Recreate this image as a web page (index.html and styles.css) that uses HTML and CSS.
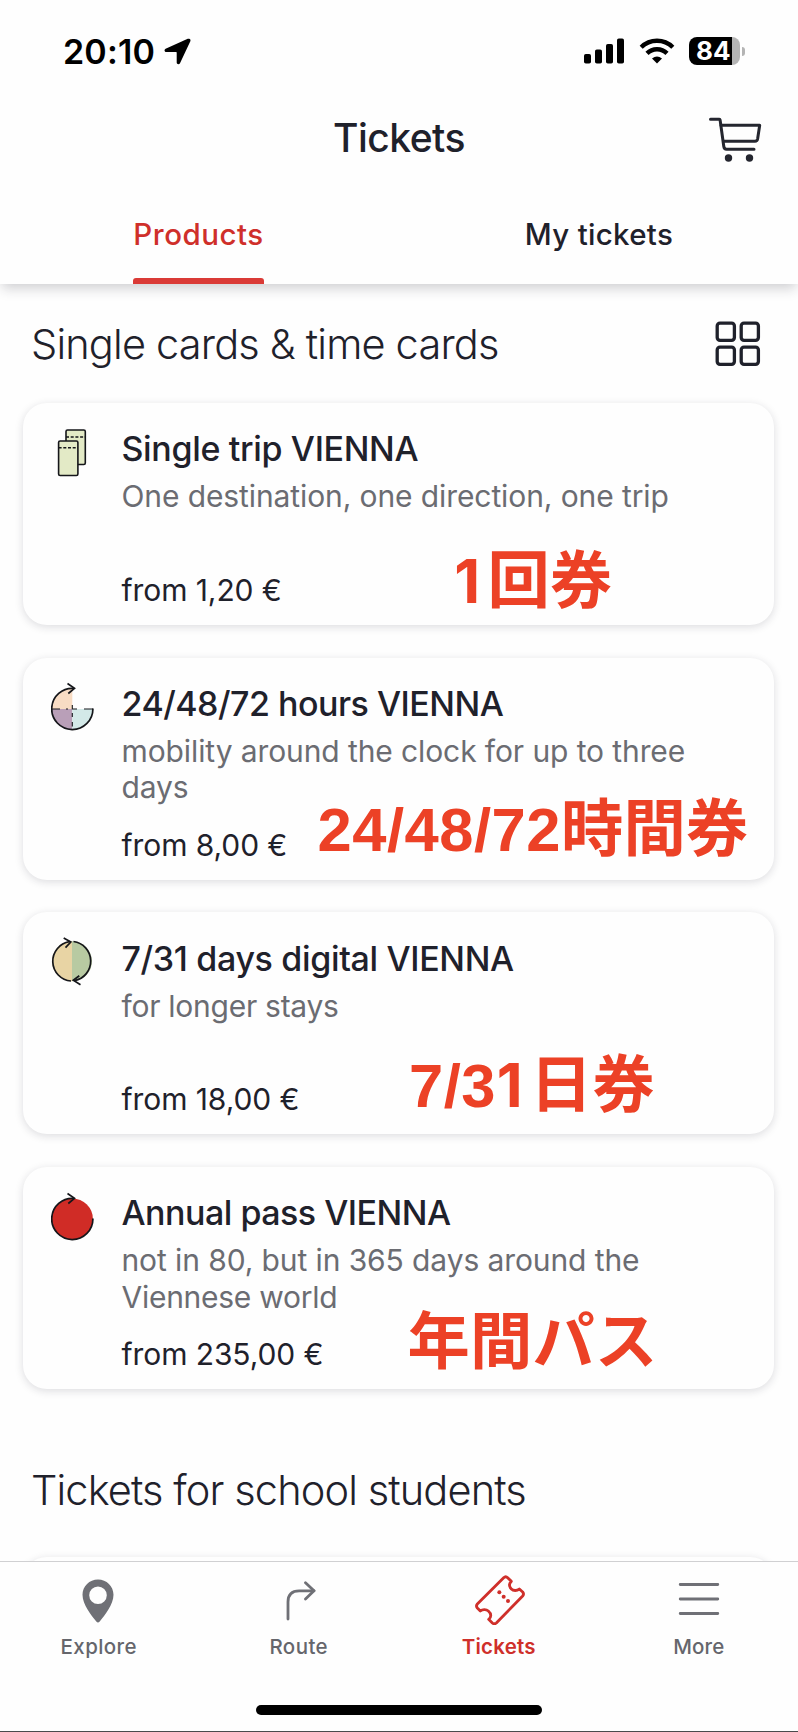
FILE: index.html
```html
<!DOCTYPE html>
<html lang="en">
<head>
<meta charset="utf-8">
<title>Tickets</title>
<link rel="stylesheet" href="styles.css">
</head>
<body>
<div class="phone">
  <header class="header">
    <div class="status">
      <div class="status-left">
        <span class="clock">20:10</span>
        <svg class="location" viewBox="0 0 27 27" width="27" height="27"><path d="M25.8 1.1C26.7 1.7 26.6 2.8 26.1 3.8L16 25.2C15.2 26.9 12.7 26.4 12.7 24.5V14.6Q12.7 14 12.1 14H2.3C.3 14-.1 11.6 1.6 10.8L23.2.9C24.1.5 25.1.6 25.8 1.1Z"/></svg>
      </div>
      <div class="status-right">
        <svg viewBox="0 0 40 26" width="40" height="26"><rect y="16" width="7" height="9.5" rx="1.8"/><rect x="11" y="11.5" width="7" height="14" rx="1.8"/><rect x="22" y="6" width="7" height="19.5" rx="1.8"/><rect x="33" y="0.5" width="7" height="25" rx="1.8"/></svg>
        <svg class="wifi" viewBox="0 0 36 26" width="36" height="26"><g fill="none" stroke="#000" stroke-width="4.4"><path d="M2.2 9.2A22.5 22.5 0 0 1 33.8 9.2"/><path d="M8 15.4A14 14 0 0 1 28 15.4"/></g><path d="M18 25.6L13 20.6Q18 16.4 23 20.6Z"/></svg>
        <div class="battery">84</div>
        <span class="battery-tip"></span>
      </div>
    </div>
    <div class="titlebar">
      <h1 class="title">Tickets</h1>
      <svg class="cart" viewBox="0 0 54 46" width="54" height="46"><g fill="none" stroke="#24262f" stroke-width="3" stroke-linecap="round" stroke-linejoin="round"><path d="M2.5 2.3H11.3Q12 2.3 12.1 3L15.8 29.5Q16.2 32.2 18.5 32.2H46"/><path d="M13 8.2H51.7L49.6 22Q49.2 24.2 47 24.2H15.5"/></g><circle cx="20.5" cy="41" r="3.7"/><circle cx="41.5" cy="41" r="3.7"/></svg>
    </div>
    <nav class="tabs">
      <div class="tab"><span class="tab-label tab-active">Products</span></div>
      <div class="tab"><span class="tab-label tab-idle">My tickets</span></div>
    </nav>
  </header>

  <main class="content">
    <div class="section-head">
      <h2 class="section-title">Single cards &amp; time cards</h2>
      <svg viewBox="0 0 46 46" width="46" height="46"><g fill="none" stroke="#1f212b" stroke-width="3.3"><rect x="2.2" y="2.2" width="17.2" height="17.2" rx="2.8"/><rect x="26.2" y="2.2" width="17.2" height="17.2" rx="2.8"/><rect x="2.2" y="26.2" width="17.2" height="17.2" rx="2.8"/><rect x="26.2" y="26.2" width="17.2" height="17.2" rx="2.8"/></g></svg>
    </div>

    <div class="cards">
      <article class="card">
        <svg class="card-icon" viewBox="0 0 46 56" width="46" height="56"><g fill="#e3eac6" stroke="#15161a" stroke-width="1.6"><rect x="15" y="4" width="19.3" height="34.5" rx="1.5"/><path d="M15 11H34.3" stroke-dasharray="3 1.7"/><rect x="7.6" y="15" width="19.3" height="34.5" rx="1.5"/><path d="M7.6 21.8H26.9" stroke-dasharray="3 1.7"/></g></svg>
        <div class="card-body">
          <h3 class="card-title">Single trip VIENNA</h3>
          <p class="card-text">One destination, one direction, one trip</p>
          <p class="price">from 1,20 €</p>
        </div>
        <span class="note note-single" lang="ja"><span class="one">1</span><span class="kanji">回券</span></span>
      </article>

      <article class="card">
        <svg class="card-icon" viewBox="0 0 46 56" width="46" height="56"><path fill="#f8dcc4" d="M21.3 29V8.5A20.5 20.5 0 0 0 .8 29Z"/><path fill="#b99fb8" d="M21.3 29V49.5A20.5 20.5 0 0 1 .8 29Z"/><path fill="#d3e9e8" d="M21.3 29V49.5A20.5 20.5 0 0 0 41.8 29Z"/><g fill="none" stroke="#15161a" stroke-width="1.7"><path d="M23 8.4A20.6 20.6 0 1 0 41.9 28.5"/><path d="M16.5 3.5L23.5 8.4L17.3 13.5"/><path stroke-width="1.1" d="M1 29H9M15 29H17M21.3 25V29H26M33 29H42M21.3 33V37M21.3 42V46.5"/></g></svg>
        <div class="card-body">
          <h3 class="card-title tight">24/48/72 hours VIENNA</h3>
          <p class="card-text">mobility around the clock for up to three <span class="line">days</span></p>
          <p class="price">from 8,00 €</p>
        </div>
        <span class="note note-hours" lang="ja">24/48/72<span class="kanji">時間券</span></span>
      </article>

      <article class="card">
        <svg class="card-icon" viewBox="0 0 46 56" width="46" height="56"><path fill="#e8d4a4" d="M21 6.3A20 20 0 0 0 21 46.3Z"/><path fill="#b8caa2" d="M21 6.3A20 20 0 0 1 21 46.3Z"/><g fill="none" stroke="#15161a" stroke-width="1.7"><path d="M18.5 6.7A19.8 19.8 0 0 0 20 46"/><path d="M22.5 6.5A19.8 19.8 0 0 1 23.5 45.6"/><path d="M12.7 3L19.8 7L14.5 12.6M29.5 49.7L22.3 45.2L28.3 40.7"/></g></svg>
        <div class="card-body">
          <h3 class="card-title">7/31 days digital VIENNA</h3>
          <p class="card-text short">for longer stays</p>
          <p class="price">from 18,00 €</p>
        </div>
        <span class="note note-days" lang="ja">7/3<span class="one">1</span><span class="kanji">日券</span></span>
      </article>

      <article class="card">
        <svg class="card-icon" viewBox="0 0 46 56" width="46" height="56"><circle cx="21.3" cy="29" r="20.6" fill="#d02c26"/><g fill="none" stroke="#15161a" stroke-width="1.7"><path d="M23 8.4A20.6 20.6 0 1 0 41.9 28.5"/><path d="M16.5 3.5L23.5 8.4L17.3 13.5"/></g></svg>
        <div class="card-body">
          <h3 class="card-title tight">Annual pass VIENNA</h3>
          <p class="card-text">not in 80, but in 365 days around the <span class="line short">Viennese world</span></p>
          <p class="price">from 235,00 €</p>
        </div>
        <span class="note note-annual" lang="ja"><span class="kanji">年間パス</span></span>
      </article>
    </div>

    <h2 class="section-title school">Tickets for school students</h2>
    <div class="cards"><article class="card"></article></div>
  </main>

  <footer class="bottom">
    <nav class="nav">
      <a class="nav-item">
        <svg class="pin" viewBox="0 0 32 44" width="32" height="44"><path fill="#6f7076" fill-rule="evenodd" d="M16 .5C24.6.5 31.5 7.2 31.5 15.8C31.5 25.5 22.5 36.5 17.7 42.6Q16 44.5 14.3 42.6C9.5 36.5.5 25.5.5 15.8C.5 7.2 7.4.5 16 .5ZM16 7.5A8.8 8.8 0 1 0 16 25.1A8.8 8.8 0 1 0 16 7.5Z"/></svg>
        <span class="nav-label explore">Explore</span>
      </a>
      <a class="nav-item">
        <svg class="route" viewBox="0 0 30 40" width="30" height="40"><g fill="none" stroke="#6f7076" stroke-width="2.8" stroke-linecap="round" stroke-linejoin="round"><path d="M2 38V21Q2 9.8 13.2 9.8H28"/><path d="M19.5 1.8L28 9.8L19.5 18"/></g></svg>
        <span class="nav-label route-label">Route</span>
      </a>
      <a class="nav-item nav-active">
        <svg class="ticket" viewBox="230 105 150 150" width="50" height="50"><path fill="none" stroke="#cf2f2a" stroke-width="8.5" stroke-linejoin="round" d="M316 113L237 192Q232 198 237 204L246 213C253 207 264 208 270 213C280 221 279 233 271 238L282 249Q288 254 294 249L373 168Q378 162 373 156L363 147C356 153 345 153 339 147C331 139 332 130 339 124L328 113Q322 107 316 113Z"/><g fill="#cf2f2a"><circle cx="303" cy="157" r="6"/><circle cx="316" cy="170" r="6"/><circle cx="329" cy="183" r="6"/></g></svg>
        <span class="nav-label">Tickets</span>
      </a>
      <a class="nav-item">
        <svg class="menu" viewBox="0 0 42 34" width="42" height="34"><path stroke="#6f7076" stroke-width="2.8" stroke-linecap="round" d="M2.2 2.5H39.8M2.2 17H39.8M2.2 31.5H39.8"/></svg>
        <span class="nav-label more">More</span>
      </a>
    </nav>
    <div class="home-indicator"></div>
  </footer>
</div>
</body>
</html>
```
FILE: styles.css
```css
* { box-sizing: border-box; }

body {
  margin: 0;
  background: #fefefe;
  font-family: Inter, "Liberation Sans", sans-serif;
  color: #1f212b;
}

h1, h2, h3, p { margin: 0; font-weight: inherit; }
svg { display: block; flex: none; }

.phone {
  display: flex;
  flex-direction: column;
  width: 798px;
  height: 1732px;
  overflow: hidden;
}

/* Header */
.header {
  position: relative;
  z-index: 1;
  flex: none;
  height: 284px;
  background: #fefefe;
  box-shadow: 0 6px 12px -2px rgba(30, 30, 45, 0.22);
}

.status {
  display: flex;
  justify-content: space-between;
  align-items: center;
  height: 102px;
  padding: 0 53px 0 63px;
}

.status-left, .status-right { display: flex; align-items: center; }
.status-left { gap: 9px; }

.clock {
  font-size: 34px;
  font-weight: 600;
  letter-spacing: 0.17px;
  color: #000;
}

.wifi { margin-left: 15px; }

.battery {
  width: 51px;
  height: 28px;
  margin-left: 14px;
  padding-left: 7px;
  border-radius: 8px;
  background: linear-gradient(to right, #000 43px, #b4b4b4 43px);
  color: #fff;
  font-size: 26px;
  font-weight: 700;
  line-height: 28px;
}

.battery-tip {
  width: 3px;
  height: 9px;
  margin-left: 2px;
  border-radius: 0 3px 3px 0;
  background: #b4b4b4;
}

.titlebar {
  display: grid;
  grid-template-columns: 1fr auto 1fr;
  align-items: center;
  height: 70px;
  padding: 0 36px;
}

.title {
  grid-column: 2;
  font-size: 39px;
  font-weight: 500;
  letter-spacing: -0.5px;
}

.cart { justify-self: end; margin-top: 5px; fill: #24262f; }

.tabs { display: grid; grid-template-columns: 1fr 1fr; height: 112px; }
.tab { display: flex; justify-content: center; }

.tab-label {
  height: 112px;
  padding: 44px 1px 0;
  font-size: 29.5px;
  font-weight: 500;
  line-height: 36px;
}

.tab-active {
  position: relative;
  left: -1px;
  letter-spacing: 0.5px;
  color: #cf2f2a;
}

.tab-active::after {
  content: "";
  position: absolute;
  left: 1px;
  right: 1px;
  bottom: 0;
  height: 6px;
  border-radius: 3px 3px 0 0;
  background: #da3a36;
}

.tab-idle { padding-left: 2px; letter-spacing: 0.3px; }

/* Product list */
.content { flex: 1; min-height: 0; overflow: hidden; }

.section-head {
  display: flex;
  justify-content: space-between;
  align-items: center;
  height: 119px;
  padding: 0 37px 0 31px;
}

.section-title {
  font-size: 41.5px;
  font-weight: 300;
  line-height: 50px;
  letter-spacing: -0.82px;
}

.cards {
  display: flex;
  flex-direction: column;
  gap: 32.7px;
  padding: 0 24px 0 23px;
}

.card {
  position: relative;
  display: flex;
  gap: 24.5px;
  height: 222px;
  padding: 22.5px 40px 17px 28px;
  border-radius: 24px;
  background: #fefefe;
  box-shadow: 0 2px 8px rgba(30, 30, 45, 0.15);
}

.card-body { display: flex; flex-direction: column; padding-top: 3.7px; }

.card-title {
  font-size: 34px;
  font-weight: 500;
  line-height: 40px;
  letter-spacing: -0.34px;
}

.tight { letter-spacing: -0.5px; }

.card-text {
  width: 580px;
  margin-top: 9px;
  font-size: 30px;
  line-height: 36.5px;
  letter-spacing: -0.1px;
  color: #6b6c72;
}

.line { display: block; }
.short { letter-spacing: -0.27px; }

.price {
  margin-top: auto;
  font-size: 30px;
  line-height: 36px;
  letter-spacing: -0.08px;
}

/* Red labels laid over the cards */
.note {
  position: absolute;
  font-family: "Liberation Sans", "Noto Sans CJK JP", sans-serif;
  font-size: 61.5px;
  font-weight: 700;
  line-height: 62px;
  letter-spacing: 0.5px;
  white-space: nowrap;
  color: #ec4126;
}

.kanji { font-size: 62.3px; letter-spacing: 0.2px; line-height: 1px; }

.one {
  display: inline-block;
  width: 34px;
  margin: 0 3px 0 -3px;
  font-family: Inter, sans-serif;
  font-size: 60px;
  text-align: center;
}

.note-single { left: 430.5px; top: 146.5px; }
.note-hours { left: 294.5px; top: 141.5px; }
.note-days { left: 386px; top: 141.5px; }
.note-annual { left: 384.5px; top: 144.5px; }

.school {
  padding: 75.500px 31px 42.500px;
  letter-spacing: -0.88px;
}

/* Bottom navigation */
.bottom {
  position: relative;
  z-index: 1;
  display: flex;
  flex-direction: column;
  align-items: center;
  flex: none;
  height: 171px;
  border-top: 1px solid #d0d0d2;
  border-bottom: 1px solid #4a4a4c;
  background: #fefefe;
}

.nav {
  display: grid;
  grid-template-columns: repeat(4, 1fr);
  align-items: start;
  width: 100%;
  height: 143px;
}

.nav-item {
  display: grid;
  grid-template-rows: 72px 26px;
  align-items: center;
  justify-items: center;
  color: #65666c;
}

.nav-active { color: #cf2f2a; }
.pin { margin: 6px 4px 0 0; }
.route { margin: 5px 0 0 3px; }
.ticket { margin: 4px 0 0 2px; }
.menu { margin: 2px 0 0 1px; }

.nav-label {
  font-size: 20.5px;
  font-weight: 500;
  line-height: 26px;
  letter-spacing: 0.4px;
}

.nav-active .nav-label { font-weight: 600; letter-spacing: 0.2px; }
.explore { margin-right: 2px; }
.route-label { margin-right: 1px; }
.more { margin-left: 1px; letter-spacing: 0.1px; }

.home-indicator {
  width: 286px;
  height: 10px;
  border-radius: 5px;
  background: #000;
}
```
